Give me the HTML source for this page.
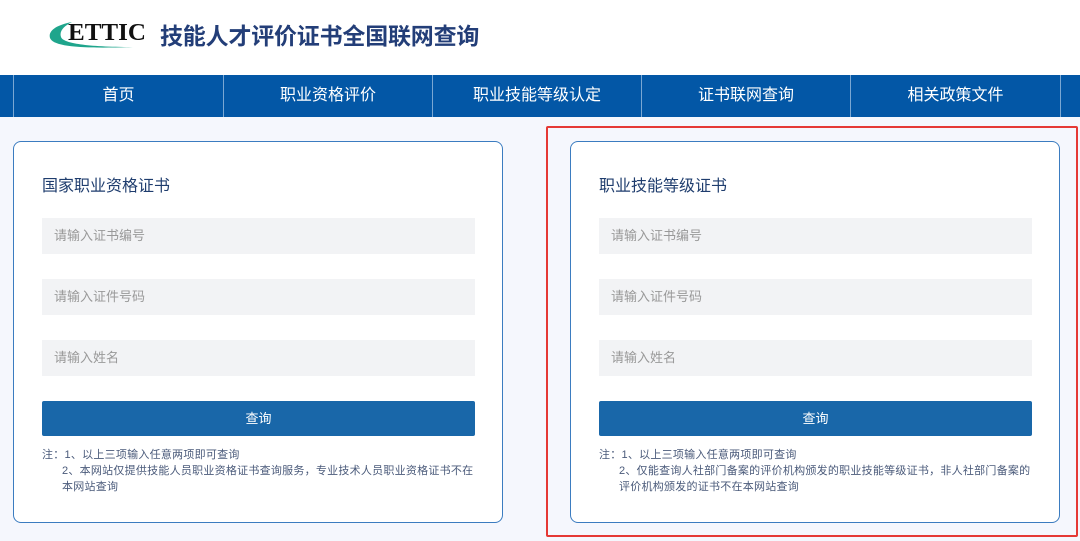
<!DOCTYPE html><html><head><meta charset="utf-8"><style>
body{margin:0;width:1080px;height:541px;overflow:hidden;background:#fff;font-family:"Liberation Sans","Noto Sans CJK SC",sans-serif;position:relative}
.hdr{height:75px;position:relative}
.title{position:absolute;left:160px;top:17px;font-size:23px;font-weight:bold;color:#233e78;letter-spacing:-0.2px}
.nav{position:absolute;top:75px;left:0;width:1080px;height:42px;background:#0357a6}
.nav div{position:absolute;top:0;height:42px;line-height:42px;text-align:center;color:#fff;font-size:16px;border-left:1px solid #7aa7d3}
.main{position:absolute;top:117px;left:0;width:1080px;height:424px;background:#f5f7fd}
.card{position:absolute;top:141px;width:488px;height:380px;border:1px solid #3b7cc0;border-radius:8px;background:#fff}
.card h3{position:absolute;left:28px;top:30px;margin:0;font-size:16px;font-weight:normal;color:#1f3d6e}
.inp{position:absolute;left:28px;width:433px;height:36px;background:#f2f3f5;color:#999;font-size:13px;line-height:36px;text-indent:12px}
.btn{position:absolute;left:28px;top:259px;width:433px;height:35px;background:#1967a9;color:#fff;font-size:13px;line-height:35px;text-align:center;border-radius:2px}
.note{position:absolute;left:28px;top:305px;width:436px;font-size:11px;line-height:16px;color:#4a5a7a;letter-spacing:0.25px}
.note p{margin:0;padding-left:20px}
.note p.f{padding-left:0}
.red{position:absolute;left:546px;top:126px;width:528px;height:407px;border:2px solid #e53935;border-radius:2px}
</style></head><body>
<div class="hdr">
<svg style="position:absolute;left:45px;top:12px" width="110" height="45" viewBox="0 0 110 45">
<path d="M27 10 C11 13 3 19 5 26 C8 34 32 37 88 35 C40 35 18 31 16 25 C14 19 19 14 27 10Z" fill="#1fa58c"/>
<text x="23" y="28" font-family="Liberation Serif" font-weight="bold" font-size="24" fill="#111" textLength="78" lengthAdjust="spacingAndGlyphs">ETTIC</text>
</svg>
<div class="title">技能人才评价证书全国联网查询</div>
</div>
<div class="nav">
<div style="left:13px;width:209px">首页</div>
<div style="left:223px;width:208px">职业资格评价</div>
<div style="left:432px;width:208px">职业技能等级认定</div>
<div style="left:641px;width:208px">证书联网查询</div>
<div style="left:850px;width:209px">相关政策文件</div>
<div style="left:1060px;width:20px"></div>
</div>
<div class="main"></div>
<div class="card" style="left:13px">
<h3>国家职业资格证书</h3>
<div class="inp" style="top:76px">请输入证书编号</div>
<div class="inp" style="top:137px">请输入证件号码</div>
<div class="inp" style="top:198px">请输入姓名</div>
<div class="btn">查询</div>
<div class="note"><p class="f">注：1、以上三项输入任意两项即可查询</p><p>2、本网站仅提供技能人员职业资格证书查询服务，专业技术人员职业资格证书不在本网站查询</p></div>
</div>
<div class="card" style="left:570px">
<h3>职业技能等级证书</h3>
<div class="inp" style="top:76px">请输入证书编号</div>
<div class="inp" style="top:137px">请输入证件号码</div>
<div class="inp" style="top:198px">请输入姓名</div>
<div class="btn">查询</div>
<div class="note"><p class="f">注：1、以上三项输入任意两项即可查询</p><p>2、仅能查询人社部门备案的评价机构颁发的职业技能等级证书，非人社部门备案的评价机构颁发的证书不在本网站查询</p></div>
</div>
<div class="red"></div>
</body></html>
